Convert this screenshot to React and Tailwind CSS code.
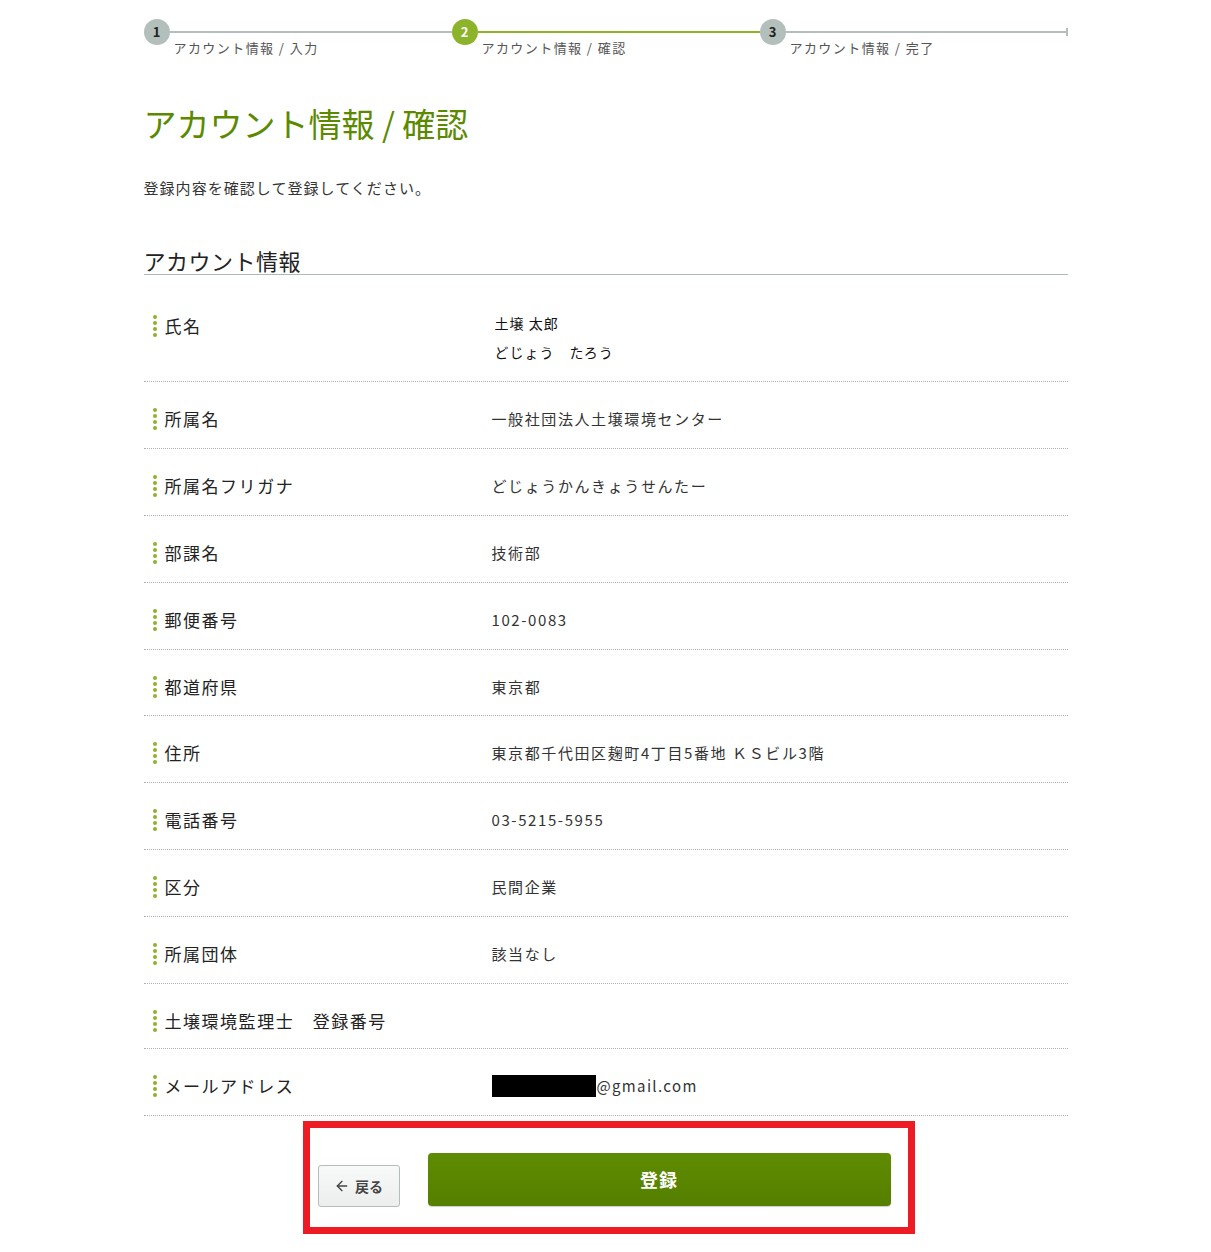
import React from "react";
import { ArrowLeft } from "lucide-react";

const FONT = { fontFamily: '"Noto Sans CJK JP", "Noto Sans", sans-serif' };

const steps = [
  { n: "1", label: "アカウント情報 / 入力", active: false, lineGreen: false },
  { n: "2", label: "アカウント情報 / 確認", active: true, lineGreen: true },
  { n: "3", label: "アカウント情報 / 完了", active: false, lineGreen: false, last: true },
];

const rows = [
  ["所属名", "一般社団法人土壌環境センター", "pb-[17px]"],
  ["所属名フリガナ", "どじょうかんきょうせんたー", "pb-[17px]"],
  ["部課名", "技術部", "pb-[17px]"],
  ["郵便番号", "102-0083", "pb-[17px]"],
  ["都道府県", "東京都", "pb-[16px]"],
  ["住所", "東京都千代田区麹町4丁目5番地 ＫＳビル3階", "pb-[17px]"],
  ["電話番号", "03-5215-5955", "pb-[17px]"],
  ["区分", "民間企業", "pb-[17px]"],
  ["所属団体", "該当なし", "pb-[17px]"],
  ["土壌環境監理士　登録番号", "", "pb-[15px]"],
];

function Dots() {
  return (
    <div className="flex flex-col justify-between h-[24px] w-[4px] shrink-0 py-[1px]">
      <span className="block w-[4px] h-[4px] rounded-full bg-[#8cb42a]" />
      <span className="block w-[4px] h-[4px] rounded-full bg-[#8cb42a]" />
      <span className="block w-[4px] h-[4px] rounded-full bg-[#8cb42a]" />
      <span className="block w-[4px] h-[4px] rounded-full bg-[#8cb42a]" />
    </div>
  );
}

function Label({ text }) {
  return (
    <div className="w-[348px] h-[24px] shrink-0 flex items-center gap-[8px] pl-[9px]">
      <Dots />
      <span className="text-[17px] leading-[24px] tracking-[0.09em] text-[#222] whitespace-nowrap">{text}</span>
    </div>
  );
}

export default function App() {
  return (
    <div className="w-full bg-white tracking-[0.1em]" style={FONT}>
      <div className="w-[924px] mx-auto pt-[19px]">
        {/* stepper */}
        <div className="flex">
          {steps.map((s) => (
            <div key={s.n} className="w-[308px]">
              <div className="flex items-center">
                <div
                  className={
                    s.active
                      ? "w-[26px] h-[26px] rounded-full bg-[#8cb42a] text-white flex items-center justify-center text-[13px] font-bold tracking-normal shrink-0"
                      : "w-[26px] h-[26px] rounded-full bg-[#b3bfbb] text-[#222] flex items-center justify-center text-[13px] font-bold tracking-normal shrink-0"
                  }
                >
                  {s.n}
                </div>
                <div className={s.lineGreen ? "flex-1 h-[2px] bg-[#8cb42a]" : "flex-1 h-[2px] bg-[#b3bfbb]"} />
                {s.last && <div className="w-[2px] h-[8px] bg-[#b3bfbb]" />}
              </div>
              <div className="-mt-[6px] pl-[30px] text-[13px] leading-[18px] tracking-[0.11em] text-[#555]">{s.label}</div>
            </div>
          ))}
        </div>

        {/* title */}
        <h1 className="mt-[46px] text-[33px] leading-[40px] tracking-normal text-[#5b8a00]">アカウント情報 / 確認</h1>
        <p className="mt-[33px] text-[15px] leading-[24px] tracking-[0.07em] text-[#333]">登録内容を確認して登録してください。</p>

        <h2 className="mt-[46px] text-[22px] leading-[28px] tracking-[0.5px] text-[#222] border-b border-[#a9bdb6]">アカウント情報</h2>

        <div className="mt-[14px]">
          {/* name row */}
          <div className="flex items-start pt-[25px] pb-[14px] border-b border-dotted border-[#a9b3b1]">
            <Label text="氏名" />
            <div className="-mt-[5px] pl-[3px] text-[14px] leading-[29px] tracking-[1px] text-[#111]">
              <div>土壌 太郎</div>
              <div>どじょう　たろう</div>
            </div>
          </div>
          {rows.map(([k, v, pb]) => (
            <div key={k} className={"flex items-start pt-[25px] border-b border-dotted border-[#a9b3b1] " + pb}>
              <Label text={k} />
              <div className="text-[15px] leading-[24px] text-[#333]">{v}</div>
            </div>
          ))}
          <div className="flex items-start pt-[25px] pb-[17px] border-b border-dotted border-[#a9b3b1]">
            <Label text="メールアドレス" />
            <div className="flex items-center text-[15px] leading-[24px] tracking-[0.09em] text-[#333]">
              <span className="block w-[104px] h-[22px] bg-black mr-[1px]" />
              <span>@gmail.com</span>
            </div>
          </div>
        </div>

        {/* buttons */}
        <div className="mt-[5px] ml-[159px] w-[612px] border-[7px] border-[#ed1c24] pt-[25px] pb-[21px] pl-[8px] pr-[17px] flex items-end gap-[28px]">
          <button className="w-[82px] h-[42px] rounded-[3px] border border-[#b3bdbb] bg-gradient-to-b from-[#f8f9f9] to-[#eceeee] flex items-center justify-center gap-[5px] text-[14px] font-bold tracking-normal text-[#444] mb-[-1px]">
            <ArrowLeft size={16} strokeWidth={2} />
            <span>戻る</span>
          </button>
          <button className="flex-1 h-[53px] rounded-[4px] bg-gradient-to-b from-[#5e8c00] to-[#557f00] text-white text-[18px] font-bold tracking-[0.05em] flex items-center justify-center shadow-[0_1px_1px_rgba(0,0,0,0.2)]">
            登録
          </button>
        </div>
        <div className="h-[18px]" />
      </div>
    </div>
  );
}
